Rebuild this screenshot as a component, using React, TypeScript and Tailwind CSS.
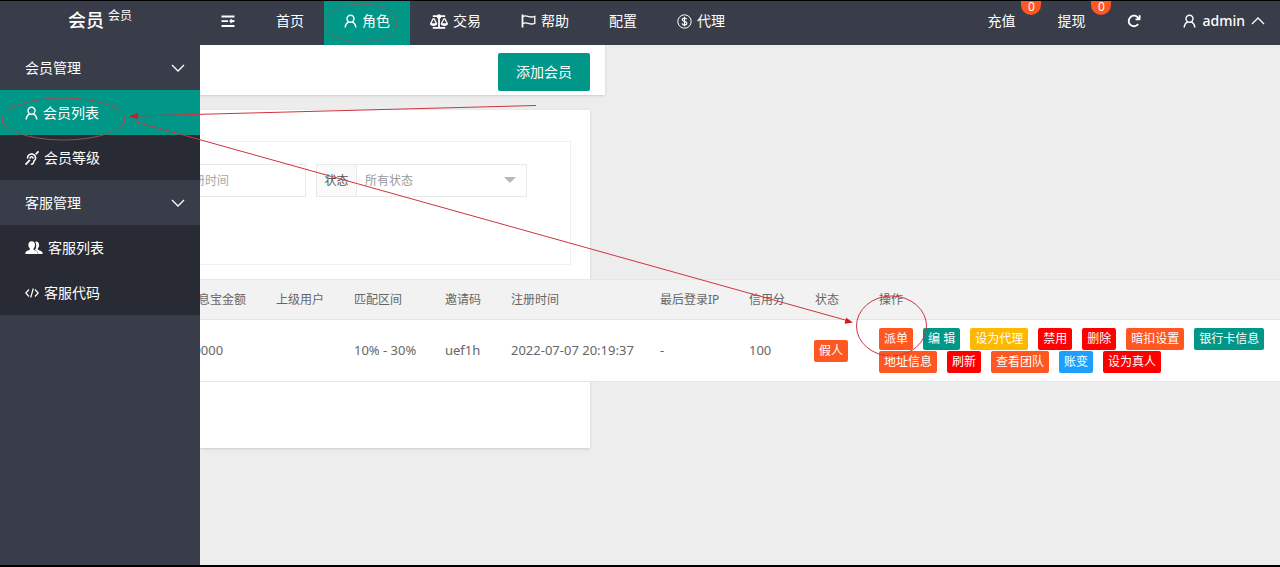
import React, { useState } from "react";
import { FaBalanceScale, FaDeaf } from "react-icons/fa";
import { FaArrowRotateRight } from "react-icons/fa6";

const UserIcon = () => (
  <svg className="w-[13px] h-[14px]" viewBox="0 0 13 14" fill="none" stroke="currentColor" strokeWidth="1.4" strokeLinecap="round">
    <circle cx="6.5" cy="4.7" r="3.5" />
    <path d="M4.600 7.800C2.700 8.700 1.500 10.700 1.200 13M8.400 7.800c1.900.9 3.100 2.900 3.400 5.200" />
  </svg>
);

const MenuIcon = () => (
  <svg className="w-4 h-4" viewBox="0 0 16 16" fill="none" stroke="currentColor" strokeWidth="1.8">
    <path d="M1.500 3.500h13M1.500 8.200h6.500M1.500 13h13M9.500 8.200h5" />
    <path d="M10.500 5.800 14.500 8.200l-4 2.400z" fill="currentColor" stroke="none" />
  </svg>
);

const FlagIcon = () => (
  <svg className="w-[15px] h-[14px]" viewBox="0 0 15 14" fill="none" stroke="currentColor" strokeWidth="1.3">
    <path d="M1.500 .5v13" strokeWidth="1.8" />
    <path d="M1.800 2.300c2-.9 3.600-.6 5.400.1 2.200.8 4 .9 6.600 0v7c-2.400.9-4.400.7-6.400 0-2-.6-3.600-.7-5.600 0" />
  </svg>
);

const DollarIcon = () => (
  <svg className="w-[15px] h-[15px]" viewBox="0 0 15 15" fill="none" stroke="currentColor">
    <circle cx="7.5" cy="7.5" r="6.700" />
    <path d="M9.700 5.300C9.400 4.400 8.600 4 7.500 4c-1.300 0-2.200.6-2.200 1.600 0 2.500 4.500 1.200 4.500 3.700 0 1.100-1 1.700-2.300 1.700s-2.200-.6-2.400-1.700M7.500 2.800v9.400" strokeWidth="1.200" />
  </svg>
);

const PeopleIcon = () => (
  <svg className="w-[18px] h-[14px]" viewBox="0 0 18 14" fill="currentColor">
    <path d="M11 .6c2 0 3.100 1.400 3.100 3.300 0 1.500-.5 2.700-1.300 3.400v1.200c.7.800 4.800 1.500 4.800 3.400V13h-4.300c0-2.200-1.500-3-3.400-3.900.9-1.200 1.500-2.800 1.300-5 0-1.200-.4-2.200-1.100-3 .3-.3.6-.5.900-.5z" />
    <path d="M6.700.3c2.100 0 3.300 1.500 3.300 3.500 0 1.600-.6 2.900-1.500 3.600v1.200c.8.900 4.300 1.500 4.300 3.500V13H.4v-.9c0-2 3.700-2.600 4.500-3.500V7.400C4 6.700 3.400 5.400 3.400 3.800 3.400 1.800 4.600.3 6.700.3z" />
  </svg>
);

const CodeIcon = () => (
  <svg className="w-[14px] h-[10px]" viewBox="0 0 14 10" fill="none" stroke="currentColor" strokeWidth="1.200">
    <path d="M4 1.500.8 5 4 8.500M10 1.500 13.200 5 10 8.500M8.300.5 5.700 9.500" />
  </svg>
);

const Chevron = ({ up = false }: { up?: boolean }) => (
  <svg className="w-[14px] h-2" viewBox="0 0 14 8" fill="none" stroke="currentColor" strokeWidth="1.300">
    <path d={up ? "M1 7l6-6 6 6" : "M1 1l6 6 6-6"} />
  </svg>
);

const navItems = [
  { label: "首页" },
  { label: "角色", icon: <UserIcon />, active: true },
  { label: "交易", icon: <FaBalanceScale className="w-[18px] h-[15px]" /> },
  { label: "帮助", icon: <FlagIcon /> },
  { label: "配置" },
  { label: "代理", icon: <DollarIcon /> },
];

const sideGroups = [
  {
    title: "会员管理",
    items: [
      { label: "会员列表", icon: <UserIcon />, active: true },
      { label: "会员等级", icon: <FaDeaf className="w-[14px] h-[14px]" /> },
    ],
  },
  {
    title: "客服管理",
    items: [
      { label: "客服列表", icon: <PeopleIcon /> },
      { label: "客服代码", icon: <CodeIcon /> },
    ],
  },
];

const columns = [
  { title: "利息宝金额", width: "w-[90px]" },
  { title: "上级用户", width: "w-[78px]" },
  { title: "匹配区间", width: "w-[91px]" },
  { title: "邀请码", width: "w-[66px]" },
  { title: "注册时间", width: "w-[149px]" },
  { title: "最后登录IP", width: "w-[89px]" },
  { title: "信用分", width: "w-[66px]" },
  { title: "状态", width: "w-[64px]" },
  { title: "操作", width: "" },
];

const member = ["10000", "", "10% - 30%", "uef1h", "2022-07-07 20:19:37", "-", "100"];

const actions = [
  { label: "派单", color: "bg-[#ff5722]" },
  { label: "编 辑", color: "bg-[#009688]" },
  { label: "设为代理", color: "bg-[#ffb800]" },
  { label: "禁用", color: "bg-[#ff0000]" },
  { label: "删除", color: "bg-[#ff0000]" },
  { label: "暗扣设置", color: "bg-[#ff5722]" },
  { label: "银行卡信息", color: "bg-[#009688]" },
  { label: "地址信息", color: "bg-[#ff5722]" },
  { label: "刷新", color: "bg-[#ff0000]" },
  { label: "查看团队", color: "bg-[#ff5722]" },
  { label: "账变", color: "bg-[#1e9fff]" },
  { label: "设为真人", color: "bg-[#ff0000]" },
];

function TopBar() {
  return (
    <header className="flex h-11 bg-[#393d49] text-sm text-white">
      <div className="flex w-[200px] shrink-0 justify-center gap-1 pt-[7px]">
        <h1 className="text-lg leading-6 font-medium">会员</h1>
        <span className="text-xs">会员</span>
      </div>
      <nav className="flex">
        <button type="button" aria-label="菜单" className="px-5 pb-1">
          <MenuIcon />
        </button>
        {navItems.map((item) => (
          <a key={item.label} href="#" className={`flex items-center gap-[5px] px-5 pb-1 ${item.active ? "bg-[#009688]" : ""}`}>
            {item.icon}
            {item.label}
          </a>
        ))}
      </nav>
      <div className="ml-auto flex gap-0.5">
        {["充值", "提现"].map((label) => (
          <a key={label} href="#" className="relative flex items-center px-5 pb-1">
            {label}
            <span className="absolute top-0 -right-1.5 h-3.5 w-5 rounded-b-full bg-[#ff5722] text-center text-xs leading-[11px]">0</span>
          </a>
        ))}
        <button type="button" aria-label="刷新" className="px-5 pb-1">
          <FaArrowRotateRight className="h-[14px] w-[14px]" />
        </button>
        <button type="button" className="flex items-center gap-1.5 pr-[15px] pb-1 pl-5 font-medium">
          <UserIcon />
          admin
          <Chevron up />
        </button>
      </div>
    </header>
  );
}

function Sidebar() {
  return (
    <aside className="w-[200px] shrink-0 bg-[#393d49] text-sm text-white">
      {sideGroups.map((group) => (
        <div key={group.title}>
          <button type="button" className="flex h-[45px] w-full items-center justify-between pr-[15px] pl-[25px]">
            {group.title}
            <Chevron />
          </button>
          <ul className="bg-[#282b33]">
            {group.items.map((item) => (
              <li key={item.label}>
                <a href="#" className={`flex h-[45px] items-center gap-[5px] pl-[25px] ${item.active ? "bg-[#009688]" : ""}`}>
                  {item.icon}
                  {item.label}
                </a>
              </li>
            ))}
          </ul>
        </div>
      ))}
    </aside>
  );
}

function SearchForm() {
  const [time, setTime] = useState("");
  const [status, setStatus] = useState("all");

  return (
    <form className="mr-[19px] flex h-[124px] items-start gap-2.5 border border-l-0 border-[#f0f0f0] pt-[22px] text-xs">
      <input
        type="text"
        aria-label="注册时间"
        className="-ml-7 h-[33px] w-[134px] border border-[#e9e9e9] px-2 placeholder:text-[#a5a5a5]"
        placeholder="注册时间"
        value={time}
        onChange={(e) => setTime(e.target.value)}
      />
      <div className="flex h-[33px] border border-[#e9e9e9]">
        <label htmlFor="status" className="flex w-10 items-center justify-center border-r border-[#e9e9e9] bg-[#fafafa] text-[#555555]">
          状态
        </label>
        <div className="relative">
          <select
            id="status"
            className="h-full w-[169px] appearance-none px-2 text-[#999999]"
            value={status}
            onChange={(e) => setStatus(e.target.value)}
          >
            <option value="all">所有状态</option>
          </select>
          <svg className="pointer-events-none absolute top-3 right-2.5 h-1.5 w-3" viewBox="0 0 12 6" fill="#b8b8b8">
            <path d="M0 0h12L6 6z" />
          </svg>
        </div>
      </div>
    </form>
  );
}

function MemberTable() {
  return (
    <table className="-ml-[29px] w-[1109px] table-fixed border-y border-[#e6e6e6] bg-white text-left text-xs text-[#666666]">
      <thead>
        <tr className="h-10 border-b border-[#e6e6e6] bg-[#f2f2f2]">
          {columns.map((col) => (
            <th key={col.title} className={`px-[15px] font-normal whitespace-nowrap ${col.width}`}>
              {col.title}
            </th>
          ))}
        </tr>
      </thead>
      <tbody>
        <tr className="h-[62px] text-[13px]">
          {member.map((value, i) => (
            <td key={i} className="px-[15px] whitespace-nowrap">
              {value}
            </td>
          ))}
          <td className="px-3.5">
            <button type="button" className="h-[22px] rounded-xs bg-[#ff5722] px-[5px] text-xs text-white">
              假人
            </button>
          </td>
          <td className="pr-2.5 pl-[15px]">
            <div className="flex flex-wrap gap-x-2.5 gap-y-px">
              {actions.map((action) => (
                <button key={action.label} type="button" className={`h-[22px] rounded-xs px-[5px] text-xs text-white ${action.color}`}>
                  {action.label}
                </button>
              ))}
            </div>
          </td>
        </tr>
      </tbody>
    </table>
  );
}

// hand drawn red marks over the page
function Annotations() {
  return (
    <svg className="pointer-events-none absolute top-0 left-0" width="1280" height="564" fill="none" stroke="#d0333f">
      <ellipse cx="361" cy="22" rx="36" ry="19" stroke="#6f6b62" />
      <ellipse cx="63.500" cy="118" rx="61.500" ry="21" stroke="#96504e" />
      <ellipse cx="891.500" cy="325" rx="35" ry="30" />
      <path d="M536 104.500 136 115M133 120l714 199.500" />
      <path d="M129 115.500l9-3.500v6zM853 321.500l-8.500 1.200 1.700-6z" fill="#d6161f" stroke="none" />
    </svg>
  );
}

export default function App() {
  return (
    <div className="relative flex min-h-screen flex-col overflow-hidden border-t border-b-2 border-black bg-[#eeedee] font-['Noto_Sans','Noto_Sans_CJK_SC',sans-serif]">
      <TopBar />
      <div className="flex flex-1">
        <Sidebar />
        <main className="min-w-0 flex-1 overflow-hidden">
          <div className="flex h-[50px] w-[405px] items-end justify-end bg-white pr-[15px] pb-1 shadow-sm">
            <button type="button" className="h-[38px] rounded-xs bg-[#009688] px-[18px] text-sm text-white">
              添加会员
            </button>
          </div>
          <div className="mt-[15px] w-[390px] bg-white pt-[31px] pb-[66px] shadow-sm">
            <SearchForm />
            <div className="mt-3.5">
              <MemberTable />
            </div>
          </div>
        </main>
      </div>
      <Annotations />
    </div>
  );
}
